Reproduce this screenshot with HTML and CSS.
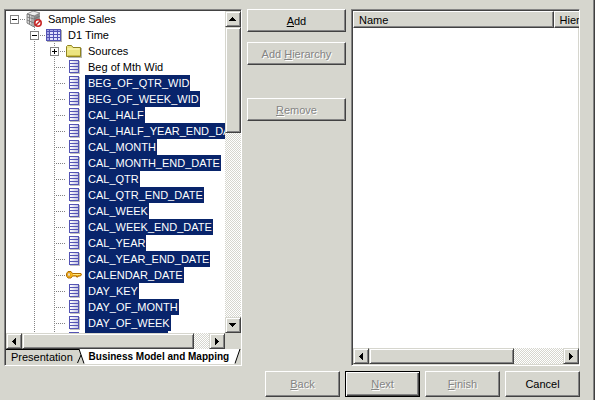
FILE: index.html
```html
<!DOCTYPE html>
<html lang="en">
<head>
  <meta charset="utf-8">
  <title>Select Columns</title>
  <link rel="stylesheet" href="styles.css">
</head>

<body>
  <!-- icons shared by the tree rows -->
  <svg class="sprite" aria-hidden="true">
    <defs>
      <linearGradient id="barFill" x1="0" x2="1">
        <stop offset="0" stop-color="#fff"/>
        <stop offset="1" stop-color="#c4c4e4"/>
      </linearGradient>
    </defs>
    <symbol id="icon-column" viewBox="0 0 16 16">
      <path d="M4 2h10v13H4z" fill="#c0c0c0"/>
      <path d="M3 1h10v13H3z" fill="#5454b4"/>
      <path d="M4 2h8v2H4zM4 5h8v2H4zM4 8h8v2H4zM4 11h8v2H4z" fill="url(#barFill)"/>
    </symbol>
    <symbol id="icon-table" viewBox="0 0 16 16">
      <path d="M1 3h15v12H1z" fill="#b0b0b0"/>
      <path d="M0 2h15v12H0z" fill="#5454b4"/>
      <path d="M1 3h2v1H1zM4 3h3v1H4zM8 3h3v1H8zM12 3h2v1h-2zM1 5h2v2H1zM1 8h2v2H1zM1 11h2v2H1z" fill="#a8a8e8"/>
      <path d="M4 5h3v2H4zM8 5h3v2H8zM12 5h2v2h-2zM4 8h3v2H4zM8 8h3v2H8zM12 8h2v2h-2zM4 11h3v2H4zM8 11h3v2H8zM12 11h2v2h-2z" fill="#e4e4fc"/>
    </symbol>
    <symbol id="icon-folder" viewBox="0 0 16 16">
      <path d="M2 15V5h14v10z" fill="#b8b8b0"/>
      <path d="M.5 13.500V3.500l1-1h4l1.500 2h7.500v9z" fill="#ece480" stroke="#908420"/>
      <path d="M1.500 6h12" stroke="#fffcc0"/>
      <path d="M1.500 12.500h12.500" stroke="#d0c048"/>
    </symbol>
    <symbol id="icon-key" viewBox="0 0 16 16">
      <path d="M.5 6.500l1.500-2h3l1.500 2H15l.5 1-1 1.500H12v1h-1.500v-1H6.500l-1.500 2H2l-1.500-2z" fill="#f8b820" stroke="#b06c00"/>
      <path d="M2 6h2v3H2z" fill="#fff" stroke="#b06c00" stroke-width=".5"/>
      <path d="M7 7.500h7" stroke="#ffe880"/>
    </symbol>
    <symbol id="icon-model" viewBox="0 0 16 16">
      <path d="M1 3l6-3 7 2v10l-6 4-7-4z" fill="#a0a0a0"/>
      <path d="M1 3l6-3 7 2-6 3z" fill="#ececec" stroke="#787878" stroke-width=".7"/>
      <path d="M1 3l7 2v11l-7-4z" fill="#d8d8d8" stroke="#606060" stroke-width=".7"/>
      <path d="M1 6l7 2 6-3M1 9l7 3 6-4M3.500 4v9M6 4.500v10M10 4.500v10M12 3v10" fill="none" stroke="#707070" stroke-width=".8"/>
      <circle cx="12" cy="12" r="3.200" fill="#fff" stroke="#c82828" stroke-width="1.600"/>
      <path d="M10 14l4-4" stroke="#c82828" stroke-width="1.500"/>
    </symbol>
  </svg>

  <main class="picker">
    <section class="source sunken">
      <div class="tree-area">
        <ul class="tree">
          <li>
            <div class="row"><span class="joint"><button class="toggle" aria-label="Collapse Sample Sales"></button></span><svg class="icon"><use href="#icon-model"/></svg><span class="label">Sample Sales</span></div>
            <ul>
              <li>
                <div class="row"><span class="joint"><button class="toggle" aria-label="Collapse D1 Time"></button></span><svg class="icon"><use href="#icon-table"/></svg><span class="label">D1 Time</span></div>
                <ul>
                  <li class="row"><span class="joint"><button class="toggle closed" aria-label="Expand Sources"></button></span><svg class="icon"><use href="#icon-folder"/></svg><span class="label">Sources</span></li>
                  <li class="row"><span class="joint"></span><svg class="icon"><use href="#icon-column"/></svg><span class="label">Beg of Mth Wid</span></li>
                  <li class="row selected"><span class="joint"></span><svg class="icon"><use href="#icon-column"/></svg><span class="label">BEG_OF_QTR_WID</span></li>
                  <li class="row selected"><span class="joint"></span><svg class="icon"><use href="#icon-column"/></svg><span class="label">BEG_OF_WEEK_WID</span></li>
                  <li class="row selected"><span class="joint"></span><svg class="icon"><use href="#icon-column"/></svg><span class="label">CAL_HALF</span></li>
                  <li class="row selected"><span class="joint"></span><svg class="icon"><use href="#icon-column"/></svg><span class="label">CAL_HALF_YEAR_END_DATE</span></li>
                  <li class="row selected"><span class="joint"></span><svg class="icon"><use href="#icon-column"/></svg><span class="label">CAL_MONTH</span></li>
                  <li class="row selected"><span class="joint"></span><svg class="icon"><use href="#icon-column"/></svg><span class="label">CAL_MONTH_END_DATE</span></li>
                  <li class="row selected"><span class="joint"></span><svg class="icon"><use href="#icon-column"/></svg><span class="label">CAL_QTR</span></li>
                  <li class="row selected"><span class="joint"></span><svg class="icon"><use href="#icon-column"/></svg><span class="label">CAL_QTR_END_DATE</span></li>
                  <li class="row selected"><span class="joint"></span><svg class="icon"><use href="#icon-column"/></svg><span class="label">CAL_WEEK</span></li>
                  <li class="row selected"><span class="joint"></span><svg class="icon"><use href="#icon-column"/></svg><span class="label">CAL_WEEK_END_DATE</span></li>
                  <li class="row selected"><span class="joint"></span><svg class="icon"><use href="#icon-column"/></svg><span class="label">CAL_YEAR</span></li>
                  <li class="row selected"><span class="joint"></span><svg class="icon"><use href="#icon-column"/></svg><span class="label">CAL_YEAR_END_DATE</span></li>
                  <li class="row selected"><span class="joint"></span><svg class="icon"><use href="#icon-key"/></svg><span class="label">CALENDAR_DATE</span></li>
                  <li class="row selected"><span class="joint"></span><svg class="icon"><use href="#icon-column"/></svg><span class="label">DAY_KEY</span></li>
                  <li class="row selected"><span class="joint"></span><svg class="icon"><use href="#icon-column"/></svg><span class="label">DAY_OF_MONTH</span></li>
                  <li class="row selected"><span class="joint"></span><svg class="icon"><use href="#icon-column"/></svg><span class="label">DAY_OF_WEEK</span></li>
                  <li class="row selected"><span class="joint"></span><svg class="icon"><use href="#icon-column"/></svg><span class="label">DAY_OF_YEAR</span></li>
                </ul>
              </li>
            </ul>
          </li>
        </ul>
        <div class="scrollbar vertical">
          <button class="arrow" aria-label="Scroll up"><svg viewBox="0 0 7 4"><path d="M3 0h1v1h1v1h1v1h1v1H0V3h1V2h1V1h1z"/></svg></button>
          <div class="thumb"></div>
          <button class="arrow" aria-label="Scroll down"><svg viewBox="0 0 7 4"><path d="M0 0h7v1H6v1H5v1H4v1H3V3H2V2H1V1H0z"/></svg></button>
        </div>
      </div>
      <div class="scrollbar horizontal">
        <button class="arrow" aria-label="Scroll left"><svg class="side" viewBox="0 0 4 7"><path d="M4 0v7H3V6H2V5H1V4H0V3h1V2h1V1h1V0z"/></svg></button>
        <div class="thumb"></div>
        <button class="arrow" aria-label="Scroll right"><svg class="side" viewBox="0 0 4 7"><path d="M0 0v7h1V6h1V5h1V4h1V3H3V2H2V1H1V0z"/></svg></button>
        <div class="corner"></div>
      </div>
      <div class="tabs">
        <button class="tab">Presentation</button>
        <svg class="edge" viewBox="0 0 8 15"><path d="M2 0h6v15H7z" fill="#fff"/><path d="M0 .5h2M2 0l5 14.500M.5 14L4 6" fill="none" stroke="#000"/></svg>
        <button class="tab active">Business Model and Mapping</button>
        <svg class="edge" viewBox="0 0 8 15"><path d="M0 0h7L2 15H0z" fill="#fff"/><path d="M7 0L2 14.500" fill="none" stroke="#000"/></svg>
      </div>
    </section>

    <div class="actions">
      <button class="btn"><u>A</u>dd</button>
      <button class="btn" disabled>Add <u>H</u>ierarchy</button>
      <button class="btn remove" disabled><u>R</u>emove</button>
    </div>

    <section class="target sunken">
      <div class="list">
        <table>
          <thead>
            <tr><th class="name">Name</th><th>Hierarchy</th></tr>
          </thead>
        </table>
      </div>
      <div class="scrollbar horizontal wide">
        <button class="arrow" aria-label="Scroll left"><svg class="side" viewBox="0 0 4 7"><path d="M4 0v7H3V6H2V5H1V4H0V3h1V2h1V1h1V0z"/></svg></button>
        <div class="thumb"></div>
        <button class="arrow" aria-label="Scroll right"><svg class="side" viewBox="0 0 4 7"><path d="M0 0v7h1V6h1V5h1V4h1V3H3V2H2V1H1V0z"/></svg></button>
      </div>
    </section>
  </main>

  <footer class="wizard">
    <button class="btn" disabled><u>B</u>ack</button>
    <button class="btn default" disabled><u>N</u>ext</button>
    <button class="btn" disabled><u>F</u>inish</button>
    <button class="btn">Cancel</button>
  </footer>
</body>
</html>
```
FILE: styles.css
```css
* {
  box-sizing: border-box;
}

body {
  margin: 0;
  height: 100vh;
  padding: 9px 14px 3px 4px;
  display: flex;
  flex-direction: column;
  gap: 5px;
  overflow: hidden;
  background-color: #d6d6ce;
  border-right: 1px solid #404040;
  box-shadow: inset -1px 0 #848484;
  font-family: "Liberation Sans", Arial, sans-serif;
  font-size: 11px;
  line-height: 14px;
  color: #000;
}

button {
  font: inherit;
  color: inherit;
  padding: 0;
}

.sprite {
  position: absolute;
  width: 0;
  height: 0;
}

.picker {
  flex: 1;
  min-height: 0;
  display: flex;
  gap: 5px;
}

.sunken {
  display: flex;
  flex-direction: column;
  min-width: 0;
  background-color: #fff;
  border: 1px solid;
  border-color: #848484 #fff #fff #848484;
  box-shadow: inset 1px 1px #424242, inset -1px -1px #d6d6ce;
  padding: 1px 0 1px 1px;
}

.source {
  flex: 238;
}

.target {
  flex: 229;
}

/* tree */
.tree-area {
  flex: 1;
  min-height: 0;
  display: flex;
}

.tree {
  flex: 1;
  min-width: 0;
  overflow: hidden;
}

.tree,
.tree ul {
  margin: 0;
  padding: 0;
  list-style: none;
}

.tree ul {
  margin-left: 20px;
  background: repeating-linear-gradient(#848484 0 1px, transparent 1px 2px) 8px 0 / 1px 100% no-repeat;
}

.row {
  display: flex;
  height: 16px;
  white-space: nowrap;
}

.joint {
  flex: none;
  display: flex;
  align-items: center;
  width: 20px;
  padding-left: 4px;
  background: repeating-linear-gradient(90deg, #848484 0 1px, transparent 1px 2px) 8px 8px / 12px 1px no-repeat;
}

.toggle {
  width: 9px;
  height: 9px;
  border: 1px solid #848484;
  background: linear-gradient(#000, #000) center / 5px 1px no-repeat #fff;
}

.toggle.closed {
  background: linear-gradient(#000, #000) center / 5px 1px no-repeat, linear-gradient(#000, #000) center / 1px 5px no-repeat #fff;
}

.icon {
  flex: none;
  width: 16px;
  height: 16px;
}

.label {
  margin-left: 3px;
  padding: 0 1px 0 3px;
  line-height: 16px;
}

.selected .label {
  background-color: #08246b;
  color: #fff;
}

/* scrollbars */
.scrollbar {
  flex: none;
  display: flex;
  background: repeating-conic-gradient(#fff 0 25%, #d6d6ce 0 50%) 0 0 / 2px 2px;
}

.vertical {
  flex-direction: column;
  width: 16px;
}

.horizontal {
  height: 16px;
}

.arrow,
.thumb {
  background-color: #d6d6ce;
  border: 1px solid;
  border-color: #d6d6ce #424242 #424242 #d6d6ce;
  box-shadow: inset 1px 1px #fff, inset -1px -1px #848484;
}

.arrow {
  flex: none;
  display: flex;
  align-items: center;
  justify-content: center;
  width: 16px;
  height: 16px;
}

.arrow:last-of-type {
  margin-left: auto;
}

.vertical .arrow:last-of-type {
  margin: auto 0 0;
}

.arrow svg {
  width: 7px;
  height: 4px;
}

.arrow .side {
  width: 4px;
  height: 7px;
}

.vertical .thumb {
  height: 33%;
}

.horizontal .thumb {
  width: 73%;
}

.wide .thumb {
  width: 64%;
}

.corner {
  width: 16px;
  background-color: #d6d6ce;
}

/* sheet tabs */
.tabs {
  flex: none;
  display: flex;
  height: 15px;
  background-color: #d6d6ce;
}

.tab {
  border: 0;
  background-color: #d6d6ce;
  border-top: 1px solid #000;
  padding: 0 4px 0 5px;
  white-space: nowrap;
}

.tab.active {
  flex: 1;
  min-width: 0;
  padding: 0;
  border-color: #fff;
  background-color: #fff;
  font-size: 10px;
  font-weight: bold;
}

.edge {
  flex: none;
  width: 8px;
  height: 15px;
}

/* buttons */
.actions {
  flex: none;
  width: 99px;
  display: flex;
  flex-direction: column;
  gap: 10px;
}

.btn {
  height: 23px;
  background-color: #d6d6ce;
  border: 1px solid;
  border-color: #fff #424242 #424242 #fff;
  box-shadow: inset -1px -1px #848484;
}

.btn:disabled {
  color: #848484;
  text-shadow: 1px 1px #fff;
}

.remove {
  margin-top: 23px;
}

.wizard {
  flex: none;
  display: flex;
  justify-content: flex-end;
  gap: 5px;
}

.wizard .btn {
  width: 75px;
  height: 26px;
}

.wizard .default {
  border-color: #000;
  box-shadow: inset 1px 1px #fff, inset -1px -1px #424242, inset -2px -2px #848484;
}

/* chosen columns */
.list {
  flex: 1;
  min-height: 0;
  overflow: hidden;
}

table {
  width: 125%;
  table-layout: fixed;
  border-collapse: separate;
  border-spacing: 0;
}

th {
  height: 17px;
  padding: 0 5px;
  text-align: left;
  font-weight: normal;
  background-color: #d6d6ce;
  border: 1px solid;
  border-color: #fff #424242 #424242 #fff;
  box-shadow: inset -1px -1px #848484;
}

.name {
  width: 71%;
}
```
